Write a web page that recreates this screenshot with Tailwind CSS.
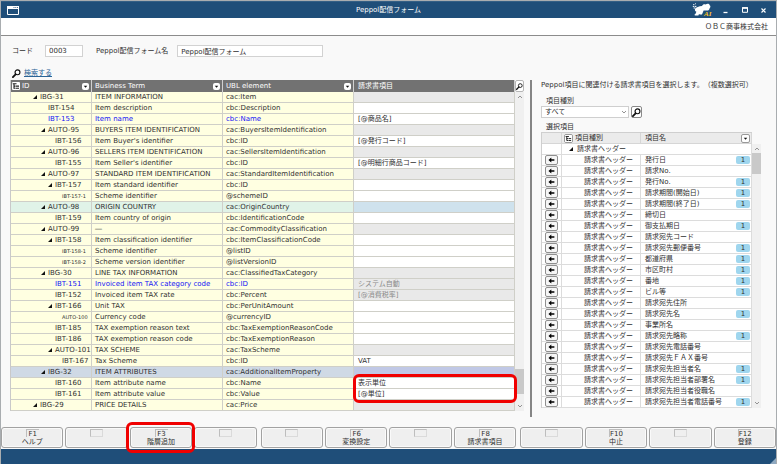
<!DOCTYPE html>
<html lang="ja">
<head>
  <meta charset="utf-8">
  <meta name="viewport" content="width=device-width, initial-scale=1">
  <title>Peppol配信フォーム</title>
  <script src="https://cdn.jsdelivr.net/npm/@tailwindcss/browser@4"></script>
</head>
<body class="min-h-screen flex flex-col bg-[#f9f9f9] border-x border-t border-[#a9adb0] font-['DejaVu_Sans','Noto_Sans_CJK_JP',sans-serif] text-[7px] leading-[10px] text-[#303030] [text-spacing-trim:space-all]">

  <!-- shared icons -->
  <svg class="hidden">
    <symbol id="i-search" viewBox="0 0 10 10"><circle cx="6.1" cy="3.7" r="2.7" fill="#fff" stroke="#111" stroke-width="1.3"/><path d="M4 5.9L1 9" stroke="#111" stroke-width="2" stroke-linecap="round"/></symbol>
    <symbol id="i-tree" viewBox="0 0 8 8"><rect width="8" height="8" rx="1" fill="#fff"/><path d="M0.7 1.7H4.5M2 2V6.3H3.6M2 4.1H3.6M4 4.1H7M4 6.3H7" fill="none" stroke="#222" stroke-width="1.1"/></symbol>
    <symbol id="i-drop" viewBox="0 0 8 8"><path d="M2 3H6L4 5.4Z" fill="#111"/></symbol>
    <symbol id="i-up" viewBox="0 0 6 4"><path d="M1 3L3 1L5 3" fill="none" stroke="#888" stroke-width="0.9"/></symbol>
    <symbol id="i-down" viewBox="0 0 6 4"><path d="M1 1L3 3L5 1" fill="none" stroke="#888" stroke-width="0.9"/></symbol>
    <symbol id="i-node" viewBox="0 0 4 4"><path d="M4 0V4H0Z" fill="#111"/></symbol>
    <symbol id="i-left" viewBox="0 0 8 6"><path d="M0.5 3L3.8 0.2V2.1H7.3V3.9H3.8V5.8Z" fill="#000"/></symbol>
  </svg>

  <header>
    <div class="relative h-[17px] bg-[#1f4e79] text-white flex items-center justify-between border-t border-[#345f85]">
      <svg class="w-3 h-[9px] ml-1.5" viewBox="0 0 12 9"><path d="M0.5 0.5H11.5V8.5H0.5Z" fill="none" stroke="#fff"/><path d="M0 0H12V3H0Z" fill="#fff"/><path d="M6.5 1.5H7.5M8.3 1.5H9.3M10 1.5H11" stroke="#1f4e79" stroke-width="0.8"/></svg>
      <h1 class="absolute inset-x-0 text-center">Peppol配信フォーム</h1>
      <div class="relative flex items-center pr-2.5">
        <svg class="w-[22px] h-4 mr-[3px] overflow-visible" viewBox="0 0 22 16">
          <path d="M3 7C4 5 7 4.4 10 4C11 2 12.4 1.8 13.6 2.6C15 1.4 17.4 1.6 17.6 3.2C18.8 3.8 18.6 5.4 17.6 6.2C17.6 7.4 16.6 8 16 8.6H11.6L10 12.6H7.8L7 12L6.4 13.6H3.2C2.2 13.2 2.4 12.2 3.4 12L4.4 9.8C3 9 2.6 8 3 7Z" fill="#fff"/>
          <path d="M1.2 2.6H2.4M3.2 1.8H4M0.8 4.4H2M2.6 4.4H4.4M1.6 6H3.4" stroke="#fff" stroke-width="1"/>
          <text x="12" y="13.5" font-family="Liberation Serif, serif" font-style="italic" font-weight="bold" font-size="7" fill="#ffc31f">AI</text>
        </svg>
        <button aria-label="最小化" class="w-4 flex justify-center mr-1"><svg class="w-[5px] h-[7px]" viewBox="0 0 5 7"><path d="M0.5 5.5H4.5" stroke="#fff" stroke-width="1.3"/></svg></button>
        <button aria-label="最大化" class="w-4 flex justify-center mr-1"><svg class="w-[6px] h-[6px]" viewBox="0 0 6 6"><path d="M0.5 0.8H5.5V5.3H0.5Z" fill="none" stroke="#fff"/><path d="M0 1H6" stroke="#fff" stroke-width="1.6"/></svg></button>
        <button aria-label="閉じる" class="flex justify-center ml-1"><svg class="w-[5px] h-[5px]" viewBox="0 0 5 5"><path d="M0.5 0.5L4.5 4.5M4.5 0.5L0.5 4.5" stroke="#fff" stroke-width="1.2"/></svg></button>
      </div>
    </div>
    <div class="h-[18px] bg-white border-b border-[#8c8c8c] flex items-center justify-end pr-2">ＯＢＣ商事株式会社</div>
  </header>

  <main class="flex-1 pl-[9px] pr-[15px] pt-[9px] flex flex-col">
    <form class="flex items-center pl-[2px]">
      <label for="code" class="mr-3">コード</label>
      <input id="code" type="text" value="0003" class="w-[38px] h-3 px-[3px] bg-white border border-[#d2d2d2] mr-[13px]">
      <label for="formName" class="mr-[9px]">Peppol配信フォーム名</label>
      <input id="formName" type="text" value="Peppol配信フォーム" class="w-[146px] h-3 px-[3px] bg-white border border-[#d2d2d2]">
    </form>
    <div class="flex items-center gap-[3px] pl-[2px] mt-[11px]">
      <svg class="w-[9px] h-[9px]"><use href="#i-search"/></svg>
      <a href="#" class="text-[#2a6496] underline">検索する</a>
    </div>

    <div class="flex mt-[2px]">
      <!-- mapping table -->
      <div class="relative flex-1">
        <table class="w-full table-fixed border-separate border-spacing-0 border-l border-[#c9c9c9]">
          <colgroup><col class="w-[81px]"><col class="w-[131px]"><col class="w-[131px]"><col></colgroup>
          <thead>
            <tr class="h-3 bg-[#727272] text-white text-left">
              <th class="p-0 font-normal border-r border-[#d0d0d0]"><div class="flex items-center pl-px pr-[2px]"><svg class="w-2 h-2 mr-[2px]"><use href="#i-tree"/></svg>ID<button aria-label="ID フィルター" class="ml-auto bg-white rounded-xs"><svg class="w-[7px] h-[7px]"><use href="#i-drop"/></svg></button></div></th>
              <th class="p-0 font-normal border-r border-[#d0d0d0]"><div class="flex items-center pl-[3px] pr-[2px]">Business Term<button aria-label="Business Term フィルター" class="ml-auto bg-white rounded-xs"><svg class="w-[7px] h-[7px]"><use href="#i-drop"/></svg></button></div></th>
              <th class="p-0 font-normal border-r border-[#d0d0d0]"><div class="flex items-center pl-[3px] pr-[2px]">UBL element<button aria-label="UBL element フィルター" class="ml-auto bg-white rounded-xs"><svg class="w-[7px] h-[7px]"><use href="#i-drop"/></svg></button></div></th>
              <th class="p-0 pl-[4px] font-normal border-r border-[#d0d0d0]">請求書項目</th>
            </tr>
          </thead>
          <tbody id="mapping"></tbody>
        </table>
        <div class="absolute left-[343px] -right-[2px] bottom-[8px] h-[29px] border-[3px] border-[#f00000] rounded-md"></div>
      </div>
      <div class="w-[9px] flex flex-col">
        <button aria-label="検索" class="h-3 flex items-center justify-center bg-white border border-[#b5b5b5] rounded-xs"><svg class="w-[7px] h-[7px]"><use href="#i-search"/></svg></button>
        <div class="flex-1 bg-[#f0f0f0] flex flex-col items-center pt-[3px] pb-[3px]">
          <svg class="w-[6px] h-[4px]"><use href="#i-up"/></svg>
          <div class="w-full h-[25px] bg-[#c9c9c9] mt-auto mb-[10px]"></div>
          <svg class="w-[6px] h-[4px]"><use href="#i-down"/></svg>
        </div>
      </div>

      <!-- item picker -->
      <div class="w-[2px] bg-[#858585] ml-[6px] -mb-[6px]"></div>
      <section class="w-[229px] pl-[9px]">
        <p class="whitespace-nowrap">Peppol項目に関連付ける請求書項目を選択します。（複数選択可）</p>
        <label for="kind" class="block mt-[6px] pl-[5px]">項目種別</label>
        <div class="flex gap-[2px]">
          <div class="relative w-[88px]">
            <select id="kind" class="block appearance-none w-full h-3 pl-[3px] bg-white border border-[#cfcfcf]"><option>すべて</option></select>
            <svg class="absolute right-[2px] top-1 w-[6px] h-[4px] pointer-events-none"><use href="#i-down"/></svg>
          </div>
          <button aria-label="項目検索" class="w-[11px] h-3 flex items-center justify-center bg-white border border-[#8a8a8a] rounded-xs"><svg class="w-[9px] h-[9px]"><use href="#i-search"/></svg></button>
        </div>
        <h2 class="mt-[4px] pl-[5px]">選択項目</h2>
        <div class="flex">
          <table class="flex-1 table-fixed border-separate border-spacing-0 border-l border-t border-[#cfcfcf]">
            <colgroup><col class="w-[20px]"><col class="w-[79px]"><col></colgroup>
            <thead>
              <tr class="h-[10px] bg-[#ebebeb] text-left">
                <th class="p-0 border-r border-b border-[#d6d6d6]"></th>
                <th class="p-0 font-normal border-r border-b border-[#d6d6d6]"><div class="flex items-center pl-[2px] h-[10px]"><span class="flex border border-[#999] rounded-xs mr-[2px]"><svg class="w-[7px] h-[7px]"><use href="#i-tree"/></svg></span>項目種別</div></th>
                <th class="p-0 font-normal border-r border-b border-[#d6d6d6]"><div class="flex items-center pl-[4px] pr-px h-[10px]">項目名<button aria-label="項目名 フィルター" class="ml-auto bg-white border border-[#999] rounded-xs"><svg class="w-[7px] h-[7px]"><use href="#i-drop"/></svg></button></div></th>
              </tr>
            </thead>
            <tbody id="items" class="bg-white"></tbody>
          </table>
          <div class="w-[9px] mt-3 bg-[#f0f0f0] flex flex-col items-center pt-[3px] pb-[3px]">
            <svg class="w-[6px] h-[4px]"><use href="#i-up"/></svg>
            <div class="w-full h-[21px] bg-[#c9c9c9] mt-[2px]"></div>
            <svg class="w-[6px] h-[4px] mt-auto"><use href="#i-down"/></svg>
          </div>
        </div>
      </section>
    </div>
  </main>

  <footer>
    <div id="keys" class="grid grid-cols-3 gap-1 pb-px"></div>
    <div class="h-[15px] bg-[#1f4e79] flex items-end justify-end"><svg class="w-[6px] h-[6px]" viewBox="0 0 6 6"><path d="M6 0V6H0Z" fill="#8fa9c0"/></svg></div>
  </footer>

  <script>
    // [level, has children, id, term, element, value, state]
    const rows = [
      [1, 1, 'IBG-31', 'ITEM INFORMATION', 'cac:Item', '', 'off'],
      [2, 0, 'IBT-154', 'Item description', 'cbc:Description', '', ''],
      [2, 0, 'IBT-153', 'Item name', 'cbc:Name', '[@商品名]', 'req'],
      [2, 1, 'AUTO-95', 'BUYERS ITEM IDENTIFICATION', 'cac:BuyersItemIdentification', '', 'off'],
      [3, 0, 'IBT-156', "Item Buyer's identifier", 'cbc:ID', '[@発行コード]', ''],
      [2, 1, 'AUTO-96', 'SELLERS ITEM IDENTIFICATION', 'cac:SellersItemIdentification', '', 'off'],
      [3, 0, 'IBT-155', "Item Seller's identifier", 'cbc:ID', '[@明細行商品コード]', ''],
      [2, 1, 'AUTO-97', 'STANDARD ITEM IDENTIFICATION', 'cac:StandardItemIdentification', '', 'off'],
      [3, 1, 'IBT-157', 'Item standard identifier', 'cbc:ID', '', ''],
      [4, 0, 'IBT-157-1', 'Scheme identifier', '@schemeID', '', ''],
      [2, 1, 'AUTO-98', 'ORIGIN COUNTRY', 'cac:OriginCountry', '', 'hover'],
      [3, 0, 'IBT-159', 'Item country of origin', 'cbc:IdentificationCode', '', ''],
      [2, 1, 'AUTO-99', '―', 'cac:CommodityClassification', '', 'off'],
      [3, 1, 'IBT-158', 'Item classification identifier', 'cbc:ItemClassificationCode', '', ''],
      [4, 0, 'IBT-158-1', 'Scheme identifier', '@listID', '', ''],
      [4, 0, 'IBT-158-2', 'Scheme version identifier', '@listVersionID', '', ''],
      [2, 1, 'IBG-30', 'LINE TAX INFORMATION', 'cac:ClassifiedTaxCategory', '', 'off'],
      [3, 0, 'IBT-151', 'Invoiced item TAX category code', 'cbc:ID', 'システム自動', 'reqoff'],
      [3, 0, 'IBT-152', 'Invoiced item TAX rate', 'cbc:Percent', '[@消費税率]', 'off'],
      [3, 1, 'IBT-166', 'Unit TAX', 'cbc:PerUnitAmount', '', ''],
      [4, 0, 'AUTO-100', 'Currency code', '@currencyID', '', ''],
      [3, 0, 'IBT-185', 'TAX exemption reason text', 'cbc:TaxExemptionReasonCode', '', ''],
      [3, 0, 'IBT-186', 'TAX exemption reason code', 'cbc:TaxExemptionReason', '', ''],
      [3, 1, 'AUTO-101', 'TAX SCHEME', 'cac:TaxScheme', '', 'off'],
      [4, 0, 'IBT-167', 'Tax Scheme', 'cbc:ID', 'VAT', ''],
      [2, 1, 'IBG-32', 'ITEM ATTRIBUTES', 'cac:AdditionalItemProperty', '', 'sel'],
      [3, 0, 'IBT-160', 'Item attribute name', 'cbc:Name', '表示単位', ''],
      [3, 0, 'IBT-161', 'Item attribute value', 'cbc:Value', '[@単位]', ''],
      [1, 1, 'IBG-29', 'PRICE DETAILS', 'cac:Price', '', 'off']
    ];
    const indent = { 1: 'pl-[21px]', 2: 'pl-[29px]', 3: 'pl-[36px]', 4: 'pl-[43px]' };
    const rowBg = { hover: 'bg-[#e0f3e8]', sel: 'bg-[#cfd9e5]' };
    const valueBg = { off: 'bg-[#e9e9e9] text-[#8a8a8a]', reqoff: 'bg-[#e9e9e9] text-[#8a8a8a]', hover: 'bg-[#cfe2ed]', sel: 'bg-[#c0c8e6]' };
    const cell = 'p-0 border-r border-b border-[#cfcfc8] whitespace-nowrap';

    document.getElementById('mapping').innerHTML = rows.map(([level, open, id, term, el, value, state]) => `
      <tr class="h-[11px] ${rowBg[state] || 'bg-[#ffffe1]'} ${state.startsWith('req') ? 'text-[#1414f5]' : ''}">
        <td class="${cell}"><div class="flex items-center h-[10px] ${indent[level]}">
          <span class="w-[8px]">${open ? '<svg class="w-1 h-1 ml-px"><use href="#i-node"/></svg>' : ''}</span>
          <span class="${level === 4 && id !== 'IBT-167' ? 'text-[5px]' : ''}">${id}</span></div></td>
        <td class="${cell} pl-[3px]">${term}</td>
        <td class="${cell} pl-[3px]">${el}</td>
        <td class="${cell} pl-[4px] ${valueBg[state] || 'bg-white text-[#303030]'}">${value}</td>
      </tr>`).join('');

    // [name, linked count]
    const items = [
      ['発行日', 1], ['請求No.', 0], ['発行No.', 1], ['請求期間(開始日)', 1], ['請求期間(終了日)', 1],
      ['締切日', 0], ['御支払期日', 1], ['請求宛先コード', 0], ['請求宛先郵便番号', 1], ['都道府県', 1],
      ['市区町村', 1], ['番地', 1], ['ビル等', 1], ['請求宛先住所', 0], ['請求宛先名', 1], ['事業所名', 0],
      ['請求宛先略称', 1], ['請求宛先電話番号', 0], ['請求宛先ＦＡＸ番号', 0], ['請求宛先担当者名', 1],
      ['請求宛先担当者部署名', 1], ['請求宛先担当者役職名', 0], ['請求宛先担当者電話番号', 1]
    ];
    const itemCell = 'p-0 border-r border-b border-[#dcdcdc] whitespace-nowrap';
    document.getElementById('items').innerHTML = `
      <tr class="h-[11px]"><td class="${itemCell}"></td>
        <td colspan="2" class="${itemCell}"><div class="flex items-center h-[10px] pl-[7px]"><svg class="w-1 h-1 mr-[4px]"><use href="#i-node"/></svg>請求書ヘッダー</div></td></tr>` +
      items.map(([name, count]) => `
      <tr class="h-[11px]">
        <td class="${itemCell}"><button aria-label="${name}を追加" class="w-[13px] h-[10px] mx-auto flex items-center justify-center bg-[#f6f6f6] border border-[#8f8f8f] rounded-xs"><svg class="w-[7px] h-[6px]"><use href="#i-left"/></svg></button></td>
        <td class="${itemCell} pl-[22px]">請求書ヘッダー</td>
        <td class="${itemCell}"><div class="flex items-center h-[10px] pl-[4px] pr-px">${name}${count ? `<span class="ml-auto w-[14px] h-2 rounded-xs bg-[#9fd6ee] text-center leading-[8px]">${count}</span>` : ''}</div></td>
      </tr>`).join('');

    const keys = [['F1', 'ヘルプ'], 0, ['F3', '階層追加'], 0, 0, ['F6', '変換設定'], 0, ['F8', '請求書項目'], 0, ['F10', '中止'], 0, ['F12', '登録']];
    const keyButton = (k) => `
      <div class="relative">
        <button ${k ? '' : 'disabled aria-label="未割当"'} class="w-full h-[21px] flex flex-col items-center pt-px bg-[#efefef] border border-[#a2a2a2] rounded-[3px] shadow-[inset_0_0_0_1px_#fafafa]">
          <span class="w-[13px] h-[8px] flex justify-center leading-[8px] border-t border-l border-[#bdbdbd] ${k ? '' : 'border-b border-r border-b-[#dadada] border-r-[#dadada]'}">${k ? k[0] : ''}</span>
          <span>${k ? k[1] : ''}</span>
        </button>
        ${k && k[0] === 'F3' ? '<div class="absolute z-10 -left-[4px] -right-[3px] -inset-y-[5px] border-[3px] border-[#f00000] rounded-md"></div>' : ''}
      </div>`;
    document.getElementById('keys').innerHTML = [0, 4, 8].map((n) =>
      `<div class="grid grid-cols-4 gap-[2px]">${keys.slice(n, n + 4).map(keyButton).join('')}</div>`).join('');
  </script>
</body>
</html>
